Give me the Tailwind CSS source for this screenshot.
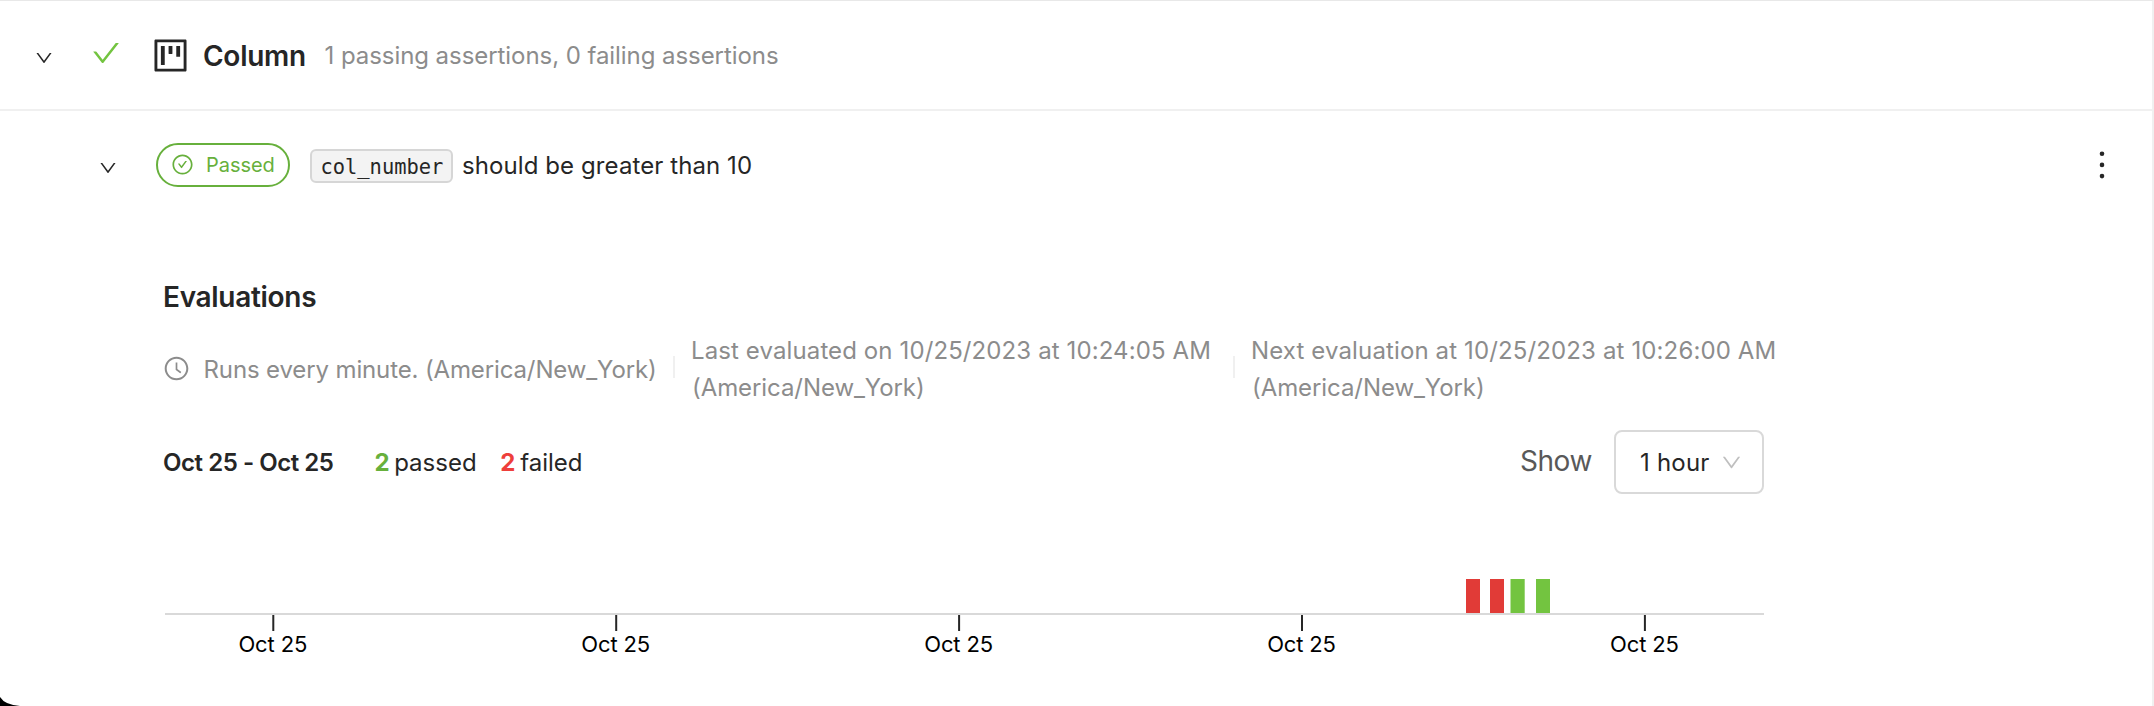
<!DOCTYPE html>
<html lang="en">
<head>
<meta charset="utf-8">
<title>Assertions</title>
<script src="https://cdn.jsdelivr.net/npm/@tailwindcss/browser@4"></script>
</head>
<body class="bg-white">
<svg class="hidden">
  <symbol id="down" viewBox="0 0 1024 1024"><path d="M884 256h-75c-5.1 0-9.9 2.5-12.9 6.6L512 654.2 227.9 262.6c-3-4.1-7.8-6.6-12.9-6.6h-75c-6.5 0-10.3 7.4-6.5 12.7l352.6 486.1c12.8 17.6 39 17.6 51.7 0l352.6-486.1c3.9-5.3.1-12.7-6.4-12.7z"/></symbol>
</svg>
<main class="relative flex h-[706px] w-[2154px] flex-col overflow-hidden border-t border-r-2 border-t-[#e8e8e8] border-r-[#f0f0f0] bg-white font-['Inter',sans-serif] text-2xl/[37px] whitespace-nowrap text-[#262626]">

  <!-- Group header -->
  <header class="flex h-[110px] shrink-0 items-start border-b-2 border-[#f0f0f0] pl-[34px]">
    <svg class="mt-[47px] size-5 fill-current"><use href="#down"/></svg>
    <svg class="mt-9 ml-[36px] size-8 fill-[#73c440]" viewBox="0 0 1024 1024"><path d="M912 190h-69.9c-9.8 0-19.1 4.5-25.1 12.2L404.7 724.5 207 474a32 32 0 00-25.1-12.2H112c-6.7 0-10.4 7.7-6.3 12.9l273.9 347c12.8 16.2 37.4 16.2 50.3 0l488.4-618.9c4.1-5.1.4-12.8-6.3-12.8z"/></svg>
    <svg class="mt-[33.5px] ml-[27.5px] size-[41px] fill-current" viewBox="0 0 1024 1024"><path d="M280 752h80c4.4 0 8-3.6 8-8V280c0-4.4-3.6-8-8-8h-80c-4.4 0-8 3.6-8 8v464c0 4.4 3.6 8 8 8zm192-280h80c4.4 0 8-3.6 8-8V280c0-4.4-3.6-8-8-8h-80c-4.4 0-8 3.6-8 8v184c0 4.4 3.6 8 8 8zm192 72h80c4.4 0 8-3.6 8-8V280c0-4.4-3.6-8-8-8h-80c-4.4 0-8 3.6-8 8v256c0 4.4 3.6 8 8 8zm216-432H144c-17.7 0-32 14.3-32 32v736c0 17.7 14.3 32 32 32h736c17.7 0 32-14.3 32-32V144c0-17.7-14.3-32-32-32zm-40 728H184V184h656v656z"/></svg>
    <h2 class="mt-[35px] ml-[12.5px] w-[121.5px] text-[28px]/[40px] font-semibold tracking-[-0.27px]">Column</h2>
    <p class="mt-9 tracking-[-0.06px] text-[#8c8c8c]">1 passing assertions, 0 failing assertions</p>
  </header>

  <!-- Assertion row -->
  <section class="flex h-[108px] shrink-0 items-center pl-[98px]">
    <svg class="mt-[5px] size-5 fill-current"><use href="#down"/></svg>
    <div class="ml-[38px] flex h-11 w-[134px] items-center rounded-full border-2 border-[#67b03c] pl-[12.5px] text-xl text-[#67b03c]">
      <svg class="mb-0.5 size-[23px] fill-current" viewBox="0 0 1024 1024"><path d="M699 353h-46.9c-10.2 0-19.9 4.9-25.9 13.3L469 584.3l-71.2-98.8c-6-8.3-15.6-13.3-25.9-13.3H325c-6.5 0-10.3 7.4-6.5 12.7l124.6 172.8a31.8 31.8 0 0051.7 0l210.6-292c3.9-5.3.1-12.7-6.4-12.7z"/><path d="M512 64C264.6 64 64 264.6 64 512s200.6 448 448 448 448-200.6 448-448S759.4 64 512 64zm0 820c-205.4 0-372-166.6-372-372s166.6-372 372-372 372 166.6 372 372-166.6 372-372 372z"/></svg>
      <span class="ml-[12.5px] tracking-[-0.05px]">Passed</span>
    </div>
    <code class="mt-0.5 ml-5 flex h-[34px] w-[143px] items-center rounded-md border-2 border-[#d6d6d6] bg-[#f3f3f3] pt-0.5 pl-[8.5px] font-['DejaVu_Sans_Mono',monospace] text-[20.4px]">col_number</code>
    <span class="ml-[9px] pt-px tracking-[0.09px]">should be greater than 10</span>
    <svg class="ml-auto mr-12 h-7 w-1.5 overflow-visible fill-current" viewBox="0 0 6 28"><circle cx="4" cy="2.7" r="2.3"/><circle cx="4" cy="13.9" r="2.3"/><circle cx="4" cy="25.1" r="2.3"/></svg>
  </section>

  <!-- Evaluation history -->
  <section class="flex w-[1800px] flex-col pt-[58px] pl-[163px]">
    <h3 class="h-[55px] text-[28px]/[40px] font-semibold tracking-[-0.3px]">Evaluations</h3>
    <div class="flex h-[79px] items-start text-[#8c8c8c]">
      <svg class="mt-[22.5px] -ml-[0.5px] size-[27px] fill-current" viewBox="0 0 1024 1024"><path d="M512 64C264.6 64 64 264.6 64 512s200.6 448 448 448 448-200.6 448-448S759.4 64 512 64zm0 820c-205.4 0-372-166.6-372-372s166.6-372 372-372 372 166.6 372 372-166.6 372-372 372z"/><path d="M686.7 638.6L544.1 535.5V288c0-4.4-3.6-8-8-8H488c-4.4 0-8 3.6-8 8v275.4c0 2.6 1.2 5 3.3 6.5l165.4 120.6c3.6 2.6 8.6 1.8 11.2-1.7l28.6-39c2.6-3.7 1.8-8.7-1.8-11.2z"/></svg>
      <span class="mt-[19px] ml-[14px] w-[469.5px] tracking-[-0.13px]">Runs every minute. (America/New_York)</span>
      <i class="mt-6 h-[22px] w-0.5 bg-[#f0f0f0]"></i>
      <p class="ml-4 w-[542px] tracking-[0.11px]">Last evaluated on 10/25/2023 at 10:24:05 AM<br><span class="ml-px tracking-[-0.08px]">(America/New_York)</span></p>
      <i class="mt-6 h-[22px] w-0.5 bg-[#f0f0f0]"></i>
      <p class="ml-4 tracking-[0.13px]">Next evaluation at 10/25/2023 at 10:26:00 AM<br><span class="ml-px tracking-[-0.08px]">(America/New_York)</span></p>
    </div>
    <div class="mt-[19px] flex h-16 w-[1601px] items-center">
      <strong class="w-[211.5px] font-semibold tracking-[-0.45px]">Oct 25 - Oct 25</strong>
      <strong class="w-[19.7px] font-bold text-[#67b03c]">2</strong>
      <span class="w-[106px]">passed</span>
      <strong class="w-5 font-bold text-[#ee3f3b]">2</strong>
      <span>failed</span>
      <span class="ml-auto mb-0.5 text-[28px] tracking-[-0.4px] text-[#595959]">Show</span>
      <div class="ml-[22px] flex h-16 w-[150px] items-center rounded-lg border-2 border-[#d9d9d9] pl-6">
        <span class="w-20 tracking-[0.2px]">1 hour</span>
        <svg class="size-[23px] fill-[#bfbfbf]"><use href="#down"/></svg>
      </div>
    </div>
    <!-- Timeline -->
    <svg class="mt-20 h-[90px] w-[1601px]" viewBox="163 574 1601 90">
      <g fill="#e13b37"><rect x="1466" y="579" width="14" height="34"/><rect x="1490" y="579" width="14" height="34"/></g>
      <g fill="#73c440"><rect x="1510.5" y="579" width="14.2" height="34"/><rect x="1536" y="579" width="14" height="34"/></g>
      <path d="M165 614H1764" stroke="#d9d9d9" stroke-width="2"/>
      <path d="M273.3 615v16M616.2 615v16M959.1 615v16M1302 615v16M1644.9 615v16" stroke="#262626" stroke-width="2"/>
      <g class="fill-black text-[22px] tracking-[-0.14px]" text-anchor="middle"><text x="272.8" y="652">Oct 25</text><text x="615.7" y="652">Oct 25</text><text x="958.6" y="652">Oct 25</text><text x="1301.5" y="652">Oct 25</text><text x="1644.4" y="652">Oct 25</text></g>
    </svg>
  </section>

  <!-- Rounded window corner -->
  <svg class="absolute bottom-0 left-0 h-[9px] w-5" viewBox="0 0 20 9"><path d="M0 0Q5 8 20 9H0z"/></svg>
</main>
</body>
</html>
